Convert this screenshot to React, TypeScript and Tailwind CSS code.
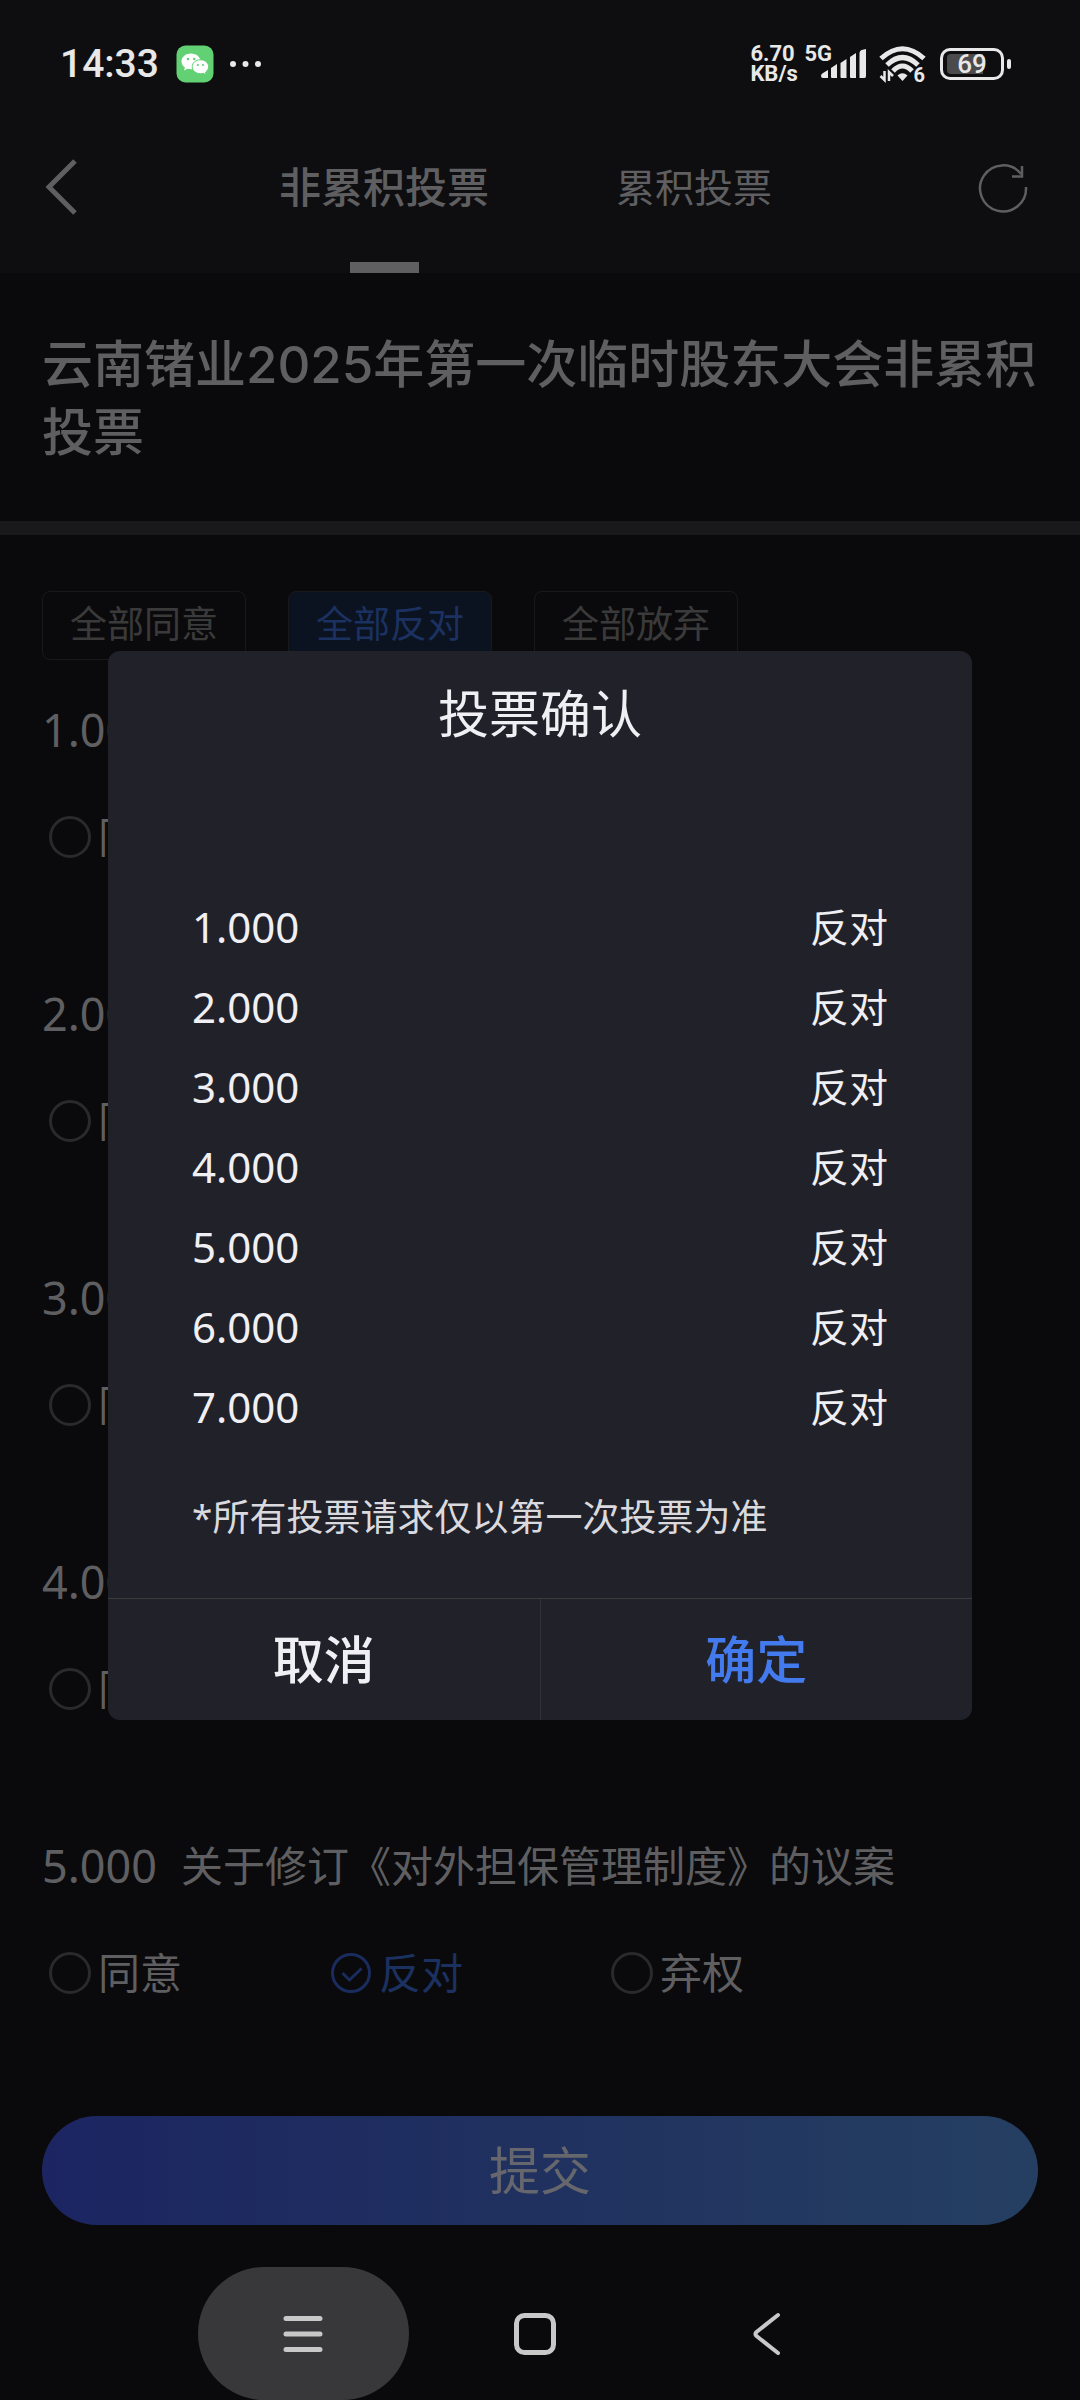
import { useState } from 'react';

const batchOptions = ['全部同意', '全部反对', '全部放弃'];
const choices = ['同意', '反对', '弃权'];

const proposals = [
  { no: '1.000', title: '' },
  { no: '2.000', title: '' },
  { no: '3.000', title: '' },
  { no: '4.000', title: '' },
  { no: '5.000', title: '关于修订《对外担保管理制度》的议案' },
];

const confirmRows = ['1.000', '2.000', '3.000', '4.000', '5.000', '6.000', '7.000'];

function StatusBar() {
  return (
    <div className="flex items-center justify-between h-[128px] pl-[60px] pr-[69px] text-[#e8e8e8] font-['Roboto','Noto_Sans_CJK_SC',sans-serif]">
      <div className="flex items-center">
        <span className="text-[39px] leading-[48px] font-medium">14:33</span>
        <svg className="ml-[17px] w-[38px] h-[38px]" viewBox="0 0 38 38" aria-hidden="true">
          <rect x="0.5" y="0.5" width="37" height="37" rx="9" fill="#62d174" />
          <path d="M15 8.5c-5.3 0-9.5 3.5-9.5 7.9 0 2.4 1.3 4.6 3.4 6L8 25.5l3.5-1.8c1.1.3 2.3.5 3.5.5 5.3 0 9.5-3.5 9.5-7.8S20.3 8.5 15 8.5z" fill="#fff" />
          <path d="M24.5 14.8c-4.7 0-8.3 3-8.3 6.9s3.6 7 8.3 7c1 0 2-.1 2.9-.4l2.8 1.5-.7-2.6c1.9-1.3 3.1-3.3 3.1-5.5 0-3.9-3.5-6.9-8.1-6.9z" fill="#fff" stroke="#62d174" strokeWidth="1" />
          <g fill="#62d174">
            <circle cx="12" cy="14" r="1.3" />
            <circle cx="18.3" cy="14" r="1.3" />
            <circle cx="21.8" cy="20" r="1.1" />
            <circle cx="27" cy="20" r="1.1" />
          </g>
        </svg>
        <svg className="ml-[16px] w-[32px] h-[8px]" viewBox="0 0 32 8" fill="currentColor" aria-hidden="true">
          <circle cx="3" cy="4" r="3" />
          <circle cx="15.5" cy="4" r="3" />
          <circle cx="28" cy="4" r="3" />
        </svg>
      </div>
      <div className="flex items-center">
        <div className="w-[54px] text-[22px] leading-[20px] font-bold">
          <div>6.70</div>
          <div>KB/s</div>
        </div>
        <div className="flex items-center">
          <span className="text-[22px] leading-[20px] font-bold pb-[20px]">5G</span>
          <svg className="-ml-[11px] w-[46px] h-[32px]" viewBox="0 0 46 32" fill="currentColor" aria-hidden="true">
            <path d="M0 28q0-2 2-3l5-3v8H2q-2 0-2-2zM10 20l6-4v14h-5q-1 0-1-1zM19.5 15l6-4v19h-5q-1 0-1-1zM29 9l6-4v25h-5q-1 0-1-1zM38.500 5q0-2 2-3l4.5-1v27q0 2-1.5 2h-5z" />
          </svg>
        </div>
        <div className="relative ml-[12px] w-[48px] h-[38px]">
          <svg className="w-[48px] h-[38px]" viewBox="0 0 48 38" fill="none" stroke="currentColor" strokeWidth="5" aria-hidden="true">
            <path d="M2 13.5Q23.5-6 45 13.5" />
            <path d="M8 20Q23.5 5 39 20" />
            <path d="M14 26Q23.5 16 33 26" />
            <path d="M23.5 36l-5-5.500q5-4.500 10 0z" fill="currentColor" stroke="none" />
            <path d="M5.5 26v9l-4-4M10 36v-9l4 4" strokeWidth="2.5" />
          </svg>
          <span className="absolute right-[2px] bottom-0 text-[20px] leading-[16px] font-bold">6</span>
        </div>
        <div className="flex items-center ml-[13px]">
          <div className="relative flex items-center justify-center w-[64px] h-[32px] rounded-[10px] border-[3px] border-current">
            <div className="absolute left-[4px] top-[3px] bottom-[3px] w-[36px] rounded-l-[4px] bg-[#4b4b4d]"></div>
            <span className="relative text-[26px] leading-[26px] font-medium">69</span>
          </div>
          <div className="ml-[3px] w-[4px] h-[10px] rounded-full bg-current"></div>
        </div>
      </div>
    </div>
  );
}

export default function App() {
  const [tab, setTab] = useState(0);
  const [batch, setBatch] = useState(1);
  const [votes, setVotes] = useState<number[]>([1, 1, 1, 1, 1]);
  const [showConfirm, setShowConfirm] = useState(true);

  const voteAll = (index: number) => {
    setBatch(index);
    setVotes(proposals.map(() => index));
  };

  const voteOne = (row: number, index: number) => {
    setVotes(votes.map((v, i) => (i === row ? index : v)));
  };

  return (
    <div className="relative min-h-screen flex flex-col bg-[#0a0a0c] text-[#5f5f61] font-['Noto_Sans','Noto_Sans_CJK_SC',sans-serif]">
      {/* Header */}
      <header className="bg-[#0e0e10]">
        <StatusBar />
        <div className="flex items-stretch h-[145px] pl-[42px] pr-[50px]">
          <button aria-label="返回" className="flex items-start pt-[31px] w-[200px]">
            <svg className="w-[36px] h-[56px]" viewBox="0 0 36 56" fill="none" stroke="#5f5f61" strokeWidth="5" aria-hidden="true">
              <path d="M33 2L7 28L33 54" />
            </svg>
          </button>
          <div role="tablist" className="flex flex-1">
            <button role="tab" aria-selected={tab === 0} onClick={() => setTab(0)} className="flex flex-col items-center justify-between w-[284px] pt-[29px]">
              <span className="text-[42px] leading-[60px] font-medium">非累积投票</span>
              {tab === 0 && <span className="w-[69px] h-[11px] bg-[#5f5f61]"></span>}
            </button>
            <button role="tab" aria-selected={tab === 1} onClick={() => setTab(1)} className="flex flex-col items-center justify-between w-[336px] pt-[29px]">
              <span className="text-[39px] leading-[60px]">累积投票</span>
              {tab === 1 && <span className="w-[69px] h-[11px] bg-[#5f5f61]"></span>}
            </button>
          </div>
          <button aria-label="刷新" className="flex items-start pt-[33px]">
            <svg className="w-[54px] h-[54px]" viewBox="0 0 54 54" fill="none" stroke="#5f5f61" strokeWidth="2.5" aria-hidden="true">
              <path d="M50 26a23 23 0 1 1-5-13" />
              <path d="M46 5v10.5H36" />
            </svg>
          </button>
        </div>
      </header>

      {/* Title */}
      <section className="px-[42px] pt-[58px] pb-[54px]">
        <h1 className="text-[51px] leading-[68px] font-medium font-['Inter','Noto_Sans_CJK_SC',sans-serif]">云南锗业2025年第一次临时股东大会非累积投票</h1>
      </section>
      <div className="h-[14px] bg-[#19191b]"></div>

      {/* Batch buttons */}
      <div className="flex gap-[42px] px-[42px] pt-[56px]">
        {batchOptions.map((label, i) => (
          <button
            key={label}
            onClick={() => voteAll(i)}
            className={`h-[69px] w-[204px] pb-[4px] rounded-[8px] border border-[#19191b] text-[37px] leading-[56px] ${batch === i ? 'bg-[#0b1220] text-[#1b3160]' : 'text-[#3a3a3b]'}`}
          >
            {label}
          </button>
        ))}
      </div>

      {/* Proposals */}
      <main className="flex-1 pt-[32px]">
        {proposals.map((item, row) => (
          <section key={item.no} className="h-[284px] px-[42px] pt-[8px]">
            <div className="flex gap-[24px] leading-[60px]">
              <span className="text-[45px]">{item.no}</span>
              {item.title && <span className="text-[42px]">{item.title}</span>}
            </div>
            <div role="radiogroup" aria-label={item.no} className="flex pl-[7px] pt-[47px]">
              {choices.map((choice, i) => {
                const checked = votes[row] === i;
                return (
                  <label key={choice} className={`relative flex items-center gap-[7px] w-[281px] ${checked ? 'text-[#1b3160]' : ''}`}>
                    <input type="radio" name={item.no} checked={checked} onChange={() => voteOne(row, i)} className="sr-only" />
                    <svg className="w-[42px] h-[42px]" viewBox="0 0 42 42" fill="none" strokeWidth="3" aria-hidden="true">
                      <circle cx="21" cy="21" r={checked ? 18.5 : 19.5} stroke={checked ? '#1a2c5e' : '#2a2a2b'} />
                      {checked && <path d="M12.5 21l7 7L31.5 16.500" stroke="#1a2c5e" />}
                    </svg>
                    <span className="text-[42px] leading-[60px]">{choice}</span>
                  </label>
                );
              })}
            </div>
          </section>
        ))}
      </main>

      {/* Submit */}
      <div className="px-[42px] pb-[42px]">
        <button
          onClick={() => setShowConfirm(true)}
          className="w-full h-[109px] pb-[2px] rounded-full bg-linear-to-r from-[#1c2562] via-[#20315f] to-[#253f62] text-[51px] leading-[68px] text-[#66676c]"
        >
          提交
        </button>
      </div>

      {/* System navigation */}
      <nav className="flex justify-center gap-[21px] pr-[10px] text-[#c8c8c8]">
        <button aria-label="最近任务" className="flex items-center justify-center w-[211px] h-[133px] rounded-full bg-[#38383a]">
          <svg className="w-[44px] h-[44px]" viewBox="0 0 44 44" stroke="currentColor" strokeWidth="5" strokeLinecap="round" aria-hidden="true">
            <path d="M5 6.5H39M5 22H39M5 37.5H39" />
          </svg>
        </button>
        <button aria-label="主屏幕" className="flex items-center justify-center w-[211px] h-[133px]">
          <svg className="w-[44px] h-[44px]" viewBox="0 0 44 44" fill="none" stroke="currentColor" strokeWidth="5" aria-hidden="true">
            <rect x="3.5" y="3.5" width="37" height="37" rx="8" />
          </svg>
        </button>
        <button aria-label="返回上一页" className="flex items-center justify-center w-[211px] h-[133px]">
          <svg className="w-[44px] h-[44px]" viewBox="0 0 44 44" fill="none" stroke="currentColor" strokeWidth="4" strokeLinecap="round" strokeLinejoin="round" aria-hidden="true">
            <path d="M33 3L11.5 20q-2 2 0 4L33 41" />
          </svg>
        </button>
      </nav>

      {/* Confirm dialog */}
      {showConfirm && (
        <div className="absolute inset-0 flex items-center justify-center pb-[29px]">
          <div role="dialog" aria-label="投票确认" className="w-4/5 rounded-[12px] bg-[#21212a] text-[#f0f0f4] overflow-hidden">
            <h2 className="pt-[28px] text-center text-[51px] leading-[68px]">投票确认</h2>
            <ul className="px-[84px] pt-[140px]">
              {confirmRows.map((no) => (
                <li key={no} className="flex items-center justify-between h-[80px]">
                  <span className="text-[42px] leading-[56px]">{no}</span>
                  <span className="text-[39px] leading-[56px]">反对</span>
                </li>
              ))}
            </ul>
            <p className="px-[84px] pt-[42px] pb-[53px] text-[37px] leading-[56px] text-[#dadade]">*所有投票请求仅以第一次投票为准</p>
            <div className="flex h-[122px] border-t border-[#3b3b3e] text-[51px] leading-[68px] font-medium">
              <button onClick={() => setShowConfirm(false)} className="flex-1 pb-[2px] border-r border-[#333337]">取消</button>
              <button onClick={() => setShowConfirm(false)} className="flex-1 pb-[2px] text-[#437bee]">确定</button>
            </div>
          </div>
        </div>
      )}
    </div>
  );
}
